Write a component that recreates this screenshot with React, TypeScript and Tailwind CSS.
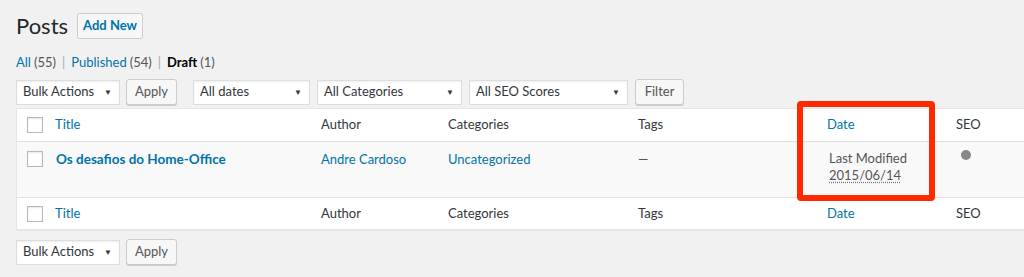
import { ReactNode } from 'react'

function Select({ label, width }: { label: string; width: string }) {
  return (
    <div
      className={`flex h-[25px] items-center justify-between border border-[#dddddd] bg-white pl-[6px] pr-[7px] text-[13px] text-[#32373c] shadow-[inset_0_1px_2px_rgba(0,0,0,0.07)] ${width}`}
    >
      <span>{label}</span>
      <span className="text-[8px] text-[#32373c]">▼</span>
    </div>
  )
}

function Button({ children, width }: { children: ReactNode; width: string }) {
  return (
    <div
      className={`flex h-[26px] items-center justify-center rounded-[3px] border border-[#cccccc] bg-[#f7f7f7] text-[13px] text-[#555555] shadow-[0_1px_0_#cccccc] ${width}`}
    >
      {children}
    </div>
  )
}

function Checkbox() {
  return (
    <div className="h-[16px] w-[16px] border border-[#b4b9be] bg-white shadow-[inset_0_1px_2px_rgba(0,0,0,0.1)]" />
  )
}

function HeaderRow({ border, height }: { border: string; height: string }) {
  return (
    <div className={`box-border flex items-center text-[13px] text-[#32373c] ${height} ${border}`}>
      <div className="w-[38px] pl-[10px]">
        <Checkbox />
      </div>
      <div className="w-[266px] text-[#0073aa]">Title</div>
      <div className="w-[127px]">Author</div>
      <div className="w-[190px]">Categories</div>
      <div className="w-[189px]">Tags</div>
      <div className="w-[129px] text-[#0073aa]">Date</div>
      <div>SEO</div>
    </div>
  )
}

export default function App() {
  return (
    <div
      className="relative h-[277px] w-[1024px] overflow-hidden bg-[#f1f1f1] pl-[16px]"
      style={{ fontFamily: 'Lato, "Open Sans", sans-serif' }}
    >
      {/* Heading */}
      <div className="flex items-center gap-[9px] pt-[13px]">
        <h1 className="text-[22px] leading-[26px] text-[#23282d]">Posts</h1>
        <div className="flex h-[26px] w-[66px] items-center justify-center rounded-[2px] border border-[#cccccc] bg-[#f7f7f7] text-[13px] font-bold text-[#0073aa]">
          Add New
        </div>
      </div>

      {/* Status links */}
      <div className="mt-[16px] flex h-[16px] items-center text-[13px] text-[#555555]">
        <span className="text-[#0073aa]">All</span>
        <span className="ml-[3px]">(55)</span>
        <span className="mx-[6px] text-[#aaaaaa]">|</span>
        <span className="text-[#0073aa]">Published</span>
        <span className="ml-[3px]">(54)</span>
        <span className="mx-[6px] text-[#aaaaaa]">|</span>
        <span className="font-bold text-[#000000]">Draft</span>
        <span className="ml-[3px]">(1)</span>
      </div>

      {/* Filters */}
      <div className="mt-[8px] flex h-[26px] items-center">
        <Select label="Bulk Actions" width="w-[104px]" />
        <div className="ml-[6px]">
          <Button width="w-[51px]">Apply</Button>
        </div>
        <div className="ml-[16px] flex gap-[7px]">
          <Select label="All dates" width="w-[117px]" />
          <Select label="All Categories" width="w-[145px]" />
          <Select label="All SEO Scores" width="w-[159px]" />
        </div>
        <div className="ml-[7px]">
          <Button width="w-[49px]">Filter</Button>
        </div>
      </div>

      {/* Table */}
      <div className="mt-[3px] w-[1020px] border border-[#e5e5e5] bg-white shadow-[0_1px_1px_rgba(0,0,0,0.04)]">
        <HeaderRow border="border-b border-[#e1e1e1]" height="h-[33px]" />
        <div className="flex h-[55px] items-start bg-[#f9f9f9] pt-[8px] text-[13px]">
          <div className="w-[38px] pl-[10px] pt-[1px]">
            <Checkbox />
          </div>
          <div className="w-[266px] pl-[1px] text-[13.5px] font-bold leading-[18px] text-[#0073aa]">
            Os desafios do Home-Office
          </div>
          <div className="w-[127px] leading-[18px] text-[#0073aa]">Andre Cardoso</div>
          <div className="w-[190px] leading-[18px] text-[#0073aa]">Uncategorized</div>
          <div className="w-[189px] leading-[18px] text-[#555555]">—</div>
          <div className="w-[129px] pl-[2px] leading-[17px] text-[#555555]">
            <div>Last Modified</div>
            <div className="underline decoration-dotted decoration-[#777777] underline-offset-[2px]">
              2015/06/14
            </div>
          </div>
          <div className="pl-[5px]">
            <div className="h-[10px] w-[10px] rounded-full bg-[#888888]" />
          </div>
        </div>
        <HeaderRow border="border-t border-[#e1e1e1]" height="h-[32px]" />
      </div>

      {/* Bottom actions */}
      <div className="mt-[9px] flex items-center">
        <Select label="Bulk Actions" width="w-[104px]" />
        <div className="ml-[6px]">
          <Button width="w-[51px]">Apply</Button>
        </div>
      </div>

      {/* Highlight */}
      <div className="absolute left-[797px] top-[101px] h-[100px] w-[138px] rounded-[4px] border-[6px] border-[#ff2a00]" />
    </div>
  )
}
